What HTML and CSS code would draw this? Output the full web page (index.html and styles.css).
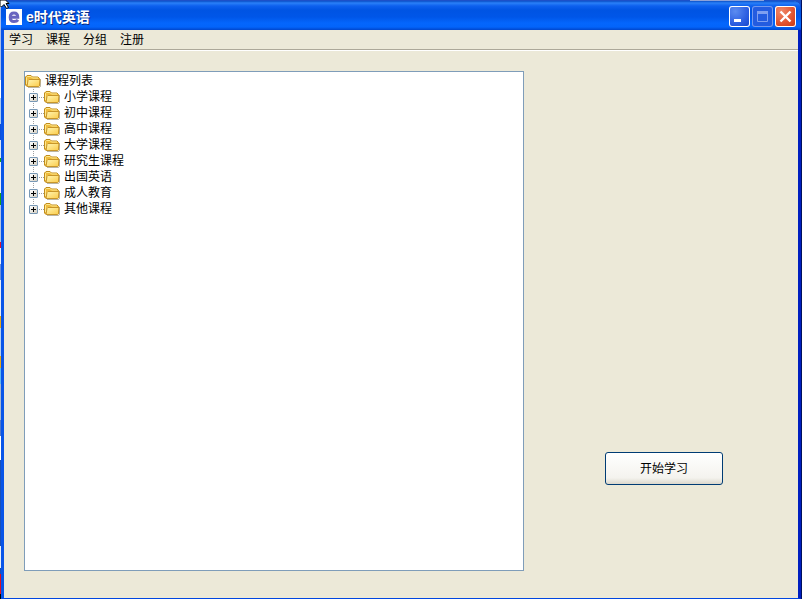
FILE: index.html
```html
<!DOCTYPE html>
<html lang="zh-CN">
<head>
<meta charset="utf-8">
<meta name="viewport" content="width=device-width, initial-scale=1">
<title>e时代英语</title>
<link rel="stylesheet" href="styles.css">
</head>
<body>
<svg class="defs" aria-hidden="true">
  <defs>
    <linearGradient id="front" x1="0" y1="0" x2="1" y2="1">
      <stop offset="0" stop-color="#fff6b4"/>
      <stop offset="1" stop-color="#fbcb48"/>
    </linearGradient>
    <symbol id="folder" viewBox="0 0 16 16">
      <path d="M3 14.500h11.500l1-1V6" fill="none" stroke="#8c8468" stroke-opacity=".6"/>
      <path d="M.5 12V4L2 2.500h4L7.500 4H13l1.500 1.500V13H1.500z" fill="#f0bc3c" stroke="#c08c1c"/>
      <path d="M1.500 11V4.500l1-1H6L7.500 5H13" fill="none" stroke="#fde890"/>
      <path d="M2 13.500L3 7.500l1-1h11l-.5 6-1 1z" fill="url(#front)" stroke="#c8962a"/>
    </symbol>
  </defs>
</svg>
<div class="desktop">
  <div class="window">
    <header class="titlebar">
      <svg class="logo" viewBox="0 0 16 16" aria-hidden="true">
        <rect width="16" height="16" fill="#fff"/>
        <path d="M12 10.800C11 12.200 9.800 12.500 8 12.500C5.200 12.500 4.200 11 4.200 8.200C4.200 5.500 5.300 4 8 4C10.700 4 11.800 5.500 11.800 8.300H5" fill="none" stroke="#6864c0" stroke-width="3"/>
      </svg>
      <h1 class="title">e时代英语</h1>
      <div class="controls">
        <button class="control" type="button" aria-label="最小化"><svg viewBox="0 0 21 21"><path d="M5 13h7v3H5z" fill="#fff"/></svg></button>
        <button class="control control-off" type="button" aria-label="最大化" disabled><svg viewBox="0 0 21 21"><path d="M5.500 6v9.500h10V6" fill="none" stroke="#7f9ff0"/><path d="M5 5h11v3H5z" fill="#7f9ff0"/></svg></button>
        <button class="control control-close" type="button" aria-label="关闭"><svg viewBox="0 0 21 21"><path d="M5.500 5.500l10 10M15.500 5.500l-10 10" stroke="#fff" stroke-width="2.400"/></svg></button>
      </div>
    </header>
    <nav class="menu">
      <button type="button">学习</button>
      <button type="button">课程</button>
      <button type="button">分组</button>
      <button type="button">注册</button>
    </nav>
    <main class="content">
      <section class="tree" aria-label="课程列表">
        <div class="row"><svg class="folder" aria-hidden="true"><use href="#folder"/></svg><span>课程列表</span></div>
        <ul class="branch">
          <li class="row"><button class="toggle" type="button" aria-label="展开小学课程"></button><svg class="folder" aria-hidden="true"><use href="#folder"/></svg><span>小学课程</span></li>
          <li class="row"><button class="toggle" type="button" aria-label="展开初中课程"></button><svg class="folder" aria-hidden="true"><use href="#folder"/></svg><span>初中课程</span></li>
          <li class="row"><button class="toggle" type="button" aria-label="展开高中课程"></button><svg class="folder" aria-hidden="true"><use href="#folder"/></svg><span>高中课程</span></li>
          <li class="row"><button class="toggle" type="button" aria-label="展开大学课程"></button><svg class="folder" aria-hidden="true"><use href="#folder"/></svg><span>大学课程</span></li>
          <li class="row"><button class="toggle" type="button" aria-label="展开研究生课程"></button><svg class="folder" aria-hidden="true"><use href="#folder"/></svg><span>研究生课程</span></li>
          <li class="row"><button class="toggle" type="button" aria-label="展开出国英语"></button><svg class="folder" aria-hidden="true"><use href="#folder"/></svg><span>出国英语</span></li>
          <li class="row"><button class="toggle" type="button" aria-label="展开成人教育"></button><svg class="folder" aria-hidden="true"><use href="#folder"/></svg><span>成人教育</span></li>
          <li class="row"><button class="toggle" type="button" aria-label="展开其他课程"></button><svg class="folder" aria-hidden="true"><use href="#folder"/></svg><span>其他课程</span></li>
        </ul>
      </section>
      <div class="side">
        <button class="start" type="button">开始学习</button>
      </div>
    </main>
  </div>
</div>
<svg class="cursor" viewBox="0 0 11 9" aria-hidden="true"><path d="M0 0h5.500l3.500 3.500H6l2.500 4-2 1L4 4.500 1.500 7 0 5.500z" fill="#fff" stroke="#000"/></svg>
</body>
</html>
```
FILE: styles.css
```css
* { box-sizing: border-box; }

body {
  margin: 0;
  font: 12px/16px "Liberation Sans", "Noto Sans CJK SC", sans-serif;
  color: #000;
}

button {
  margin: 0;
  padding: 0;
  border: 0;
  background: none;
  font: inherit;
  color: inherit;
}

.defs {
  position: absolute;
  width: 0;
  height: 0;
}

.cursor {
  position: absolute;
  top: 0;
  left: 0;
  width: 11px;
  height: 9px;
}

/* The wallpaper shows through around the window */
.desktop {
  display: flex;
  min-height: 100vh;
  padding: 1px 1px 0;
  background:
    linear-gradient(#8da2d8, #8da2d8) 690px 0 / 74px 1px no-repeat,
    linear-gradient(#00105c, #00105c) right / 1px 100% no-repeat,
    linear-gradient(
      #a9bde8 80px, #fff 80px 98px, #a8c8ee 98px 124px, #0c50d8 124px 140px,
      #d8e4f4 140px 158px, #17a010 158px 162px, #e8eef8 162px 193px, #17a010 193px 205px,
      #b4c4e0 205px 242px, #e01030 242px 248px, #eef2fa 248px 264px, #6c8fd8 264px 280px,
      #e8eef8 280px 316px, #e8a818 316px 328px, #b4d0f0 328px 356px, #e8a818 356px 368px,
      #60b8f0 368px 384px, #a8b8d0 384px 420px, #5078c8 420px 436px, #fff 436px 460px,
      #1850b8 460px 546px, #e8eef8 546px 568px, #1850b8 568px 574px, #e01020 574px 594px, #000 594px) left / 1px 100% no-repeat,
    #1c50c8;
}

.window {
  flex: 1;
  display: flex;
  flex-direction: column;
  border: solid #0046e0;
  border-width: 0 3px 1px;
  border-left-color: #0855e8;
  border-right-color: #001fc0;
  border-radius: 7px 7px 0 0;
  background: #ece9d8;
}

.titlebar {
  display: flex;
  align-items: center;
  height: 29px;
  margin: 0 -3px;
  padding: 2px 5px 0;
  border-radius: 7px 7px 0 0;
  background: linear-gradient(#0a50c8, #2a80f8 2px, #0d60ee 5px, #0054e3 9px, #0056e8 16px, #0466fc 22px, #0364fa 26px, #0046cc);
}

.logo {
  width: 16px;
  height: 16px;
}

.title {
  flex: 1;
  margin: 0 0 0 4px;
  font-size: 14px;
  line-height: 16px;
  color: #fff;
  text-shadow: 1px 1px #0a2a80;
}

.controls {
  display: flex;
  gap: 2px;
}

.control {
  width: 21px;
  height: 21px;
  border-radius: 3px;
  background: radial-gradient(circle at 30% 25%, #5c8cf0, #2a5ce0 60%, #1444c8);
  box-shadow: inset 0 0 0 1px #fff;
}

.control svg {
  display: block;
}

.control-off {
  background: #245ce0;
  box-shadow: inset 0 0 0 1px #7499ee;
}

.control-close {
  background: radial-gradient(circle at 30% 25%, #f08868, #e0502c 60%, #c03810);
}

.menu {
  display: flex;
  gap: 13px;
  padding: 2px 5px 1px;
  border-bottom: 1px solid #aca899;
  box-shadow: 0 1px #fff;
}

.content {
  flex: 1;
  display: grid;
  grid-template-columns: 500fr 274fr;
  padding: 21px 0 27px 20px;
}

.tree {
  padding: 1px 0;
  border: 1px solid #7f9db9;
  background: #fff;
}

.row {
  display: flex;
  align-items: center;
  height: 16px;
}

.folder {
  width: 16px;
  height: 16px;
  margin-right: 4px;
}

.branch {
  margin: 0;
  padding: 0 0 0 4px;
  list-style: none;
  background: repeating-linear-gradient(#a0a0a0 0 1px, #fff 1px 2px) 8px 0 / 1px 120px no-repeat;
}

.toggle {
  width: 9px;
  height: 9px;
  border: 1px solid #7898b5;
  border-radius: 1px;
  background:
    linear-gradient(#000, #000) center / 5px 1px no-repeat,
    linear-gradient(#000, #000) center / 1px 5px no-repeat,
    linear-gradient(135deg, #fff, #d4cfc2);
}

.toggle + .folder {
  margin-left: 6px;
}

.branch .row {
  background: repeating-linear-gradient(90deg, #a0a0a0 0 1px, #fff 1px 2px) 10px 8px / 5px 1px no-repeat;
}

.side {
  display: flex;
  align-items: flex-end;
  justify-content: center;
  padding: 0 0 86px 6px;
}

.start {
  width: 118px;
  height: 33px;
  border: 1px solid #003c74;
  border-radius: 3px;
  background: linear-gradient(#fff, #f4f3ee 80%, #dcd8cc);
}
```
